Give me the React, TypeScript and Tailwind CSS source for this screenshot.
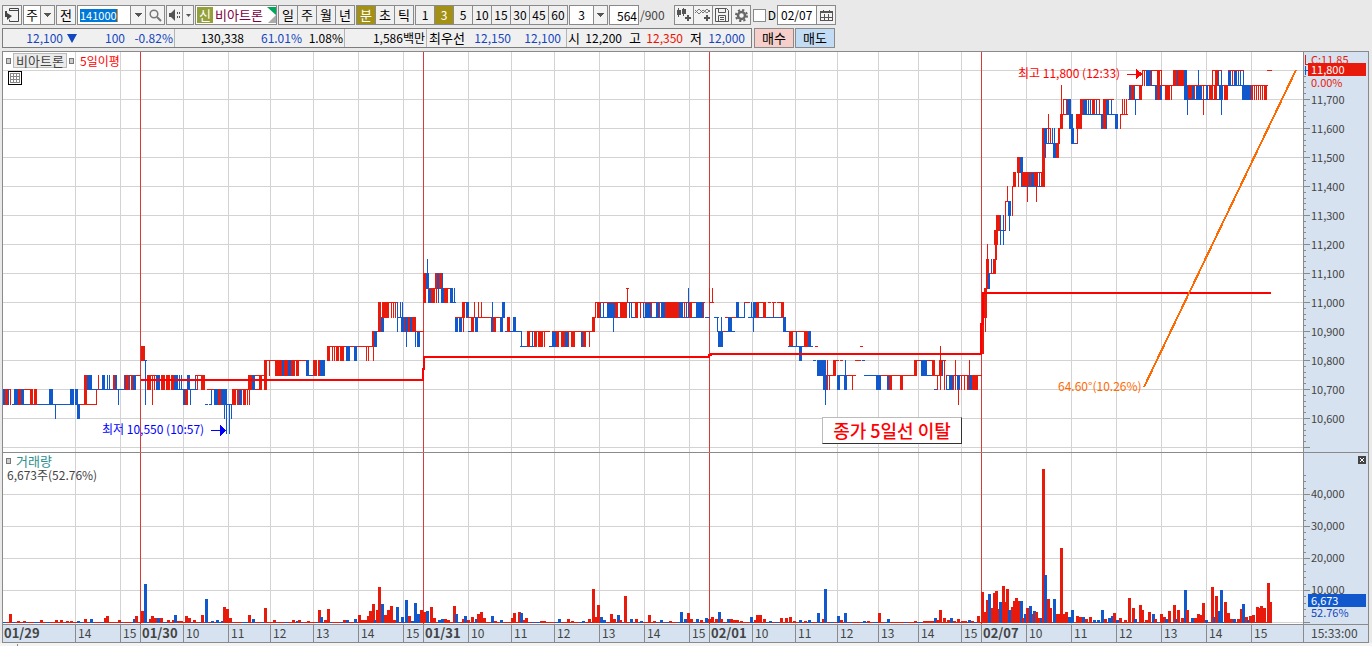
import type { ReactNode } from "react";
import clsx from "clsx";

const RED = "#e81a0c";
const BLUE = "#1058cc";

const PLOT_X = 3;
const PLOT_W = 1300;

const pct = (x: number) => `${((x - PLOT_X) / PLOT_W) * 100}%`;

// one level is 50 won, level 0 is 11,800
const levelY = (level: number) => Math.round(70 + 14.5 * level);

// color x width topLevel bottomLevel
const CANDLES = `
r 3 7 22 22;b 3 2 22 23;r 5 3 22 23;b 8 1 22 23;r 10 1 22 23;b 12 5 23 23;b 14 3 22 23;b 17 1 22 23;r 18 3 22 23;b 21 3 22 23;r 24 6 22 22;b 24 13 23 23;
r 30 3 22 23;r 34 3 22 23;b 37 12 23 23;b 49 4 22 23;b 53 17 23 23;b 55 1 23 24;b 70 4 22 23;b 75 3 22 23;b 77 3 23 24;r 80 4 23 23;
r 84 3 21 23;b 87 5 21 22;r 87 10 23 23;r 96 1 22 23;b 92 8 22 22;r 98 1 21 22;b 100 25 22 22;b 102 3 21 22;b 107 1 21 22;b 109 1 21 22;r 113 2 21 22;b 115 2 21 22;b 118 1 22 23;
r 124 17 21 21;r 124 1 21 22;b 125 1 21 22;r 126 3 21 22;b 129 1 21 22;r 131 2 21 22;b 133 3 21 22;
r 141 4 19 20;b 144 3 20 20;b 145 1 20 23;r 147 9 21 21;r 147 4 21 22;r 152 1 21 23;r 154 1 21 22;b 156 4 21 22;r 161 4 21 22;r 166 4 21 22;r 171 3 21 22;b 174 4 21 22;b 179 1 21 22;b 181 1 21 22;b 178 9 22 22;
b 183 2 22 23;r 185 3 22 23;b 187 3 21 22;b 190 1 22 23;b 188 10 22 22;b 195 1 21 22;r 195 10 21 21;r 197 1 21 22;r 201 4 21 22;r 207 4 22 22;
b 205 3 23 23;b 209 3 23 23;b 211 1 22 23;r 210 5 22 22;b 214 4 22 23;r 218 3 22 23;b 221 6 22 23;b 224 1 23 24;b 226 1 23 25;b 229 1 23 25;b 231 1 23 24;b 227 5 23 23;
r 232 4 22 23;r 237 2 22 23;b 239 3 22 23;r 243 3 22 23;r 247 1 22 23;r 249 1 22 23;r 232 18 22 22;
r 248 4 21 22;b 252 3 21 22;r 255 4 22 22;r 255 10 21 21;r 259 3 21 22;r 264 3 20 22;r 269 1 20 21;r 266 40 20 20;
r 275 7 20 21;b 282 2 20 21;r 284 4 20 21;b 288 3 20 21;r 291 4 20 21;r 296 3 20 21;b 306 3 20 21;b 309 5 21 21;r 313 4 20 21;r 318 2 20 21;b 320 5 20 21;
r 327 47 19 19;r 327 3 19 20;r 332 1 19 20;r 334 1 19 20;r 336 3 19 20;r 340 4 19 20;b 346 4 19 20;b 354 3 19 20;r 366 1 19 20;r 368 1 19 20;r 373 1 18 20;
r 372 2 18 19;b 374 3 18 19;r 377 3 18 18;r 378 3 16 18;b 381 3 17 18;r 382 7 16 17;r 382 16 16 16;r 391 1 16 17;r 393 1 16 17;r 395 1 16 17;b 397 1 16 18;b 400 1 16 17;b 402 1 16 17;b 397 5 17 17;
b 401 3 17 18;r 404 1 17 18;b 405 3 17 18;r 408 2 17 18;b 410 2 17 18;r 412 4 17 18;b 406 1 18 19;b 415 1 18 19;b 417 3 18 19;r 416 8 18 18;
r 423 3 14 16;b 426 3 14 15;b 427 1 13 14;b 428 3 15 16;r 428 24 15 15;r 431 4 15 16;r 436 1 15 16;b 438 1 15 16;r 435 2 14 15;b 437 2 14 15;r 439 3 14 15;b 442 1 14 15;b 441 3 15 16;r 444 4 15 16;b 450 3 15 16;b 454 1 15 16;b 453 3 16 16;
b 455 3 17 18;b 459 3 17 18;r 463 1 17 18;r 455 8 17 17;r 462 3 16 17;r 464 3 16 16;b 466 3 16 17;r 467 35 17 17;b 468 4 18 18;r 471 3 17 18;b 475 3 17 18;r 474 1 16 17;r 478 1 16 17;r 481 1 16 17;
b 492 1 16 17;b 491 2 17 18;r 493 3 17 18;b 500 3 17 18;b 502 3 16 17;b 505 3 18 18;r 507 3 17 18;b 513 3 17 18;b 510 11 18 18;b 521 1 18 19;b 520 7 19 19;
r 527 3 18 19;r 527 23 18 18;b 532 1 18 19;b 530 5 19 19;r 534 3 18 19;r 538 5 18 19;r 544 1 18 19;b 549 4 19 19;b 552 4 18 19;r 556 3 18 19;r 561 4 18 19;b 565 3 18 19;r 568 1 18 19;r 571 4 18 19;b 581 2 18 19;r 583 3 18 19;r 589 1 18 19;r 552 43 18 18;
r 592 3 17 18;r 595 1 16 17;r 597 3 16 17;b 600 1 16 17;b 603 1 16 17;b 600 24 17 17;b 607 8 16 17;r 595 48 16 16;r 615 3 16 17;r 620 7 16 17;b 613 1 17 18;r 627 1 15 16;r 626 3 15 15;b 629 1 16 17;b 631 1 16 17;b 631 5 17 17;
r 635 3 16 17;r 640 1 16 17;b 643 1 16 17;b 645 6 16 17;r 651 1 16 17;b 643 60 17 17;r 643 62 16 16;b 656 3 16 17;r 659 1 16 17;b 661 4 16 17;r 665 14 16 17;b 679 4 16 17;r 684 1 16 17;b 686 1 16 17;b 688 1 15 17;r 689 3 16 17;b 696 8 16 17;r 703 1 16 17;b 705 5 17 17;
r 709 1 15 16;r 712 1 15 16;r 709 5 16 16;b 714 5 17 17;b 717 1 17 18;b 721 1 17 18;b 718 5 18 19;r 723 3 18 18;b 726 9 18 18;b 728 4 17 18;r 725 3 17 17;r 731 5 17 17;
b 736 3 16 17;b 744 1 16 17;b 739 6 17 17;r 744 6 16 16;b 748 5 17 17;b 751 1 16 17;b 753 3 16 17;b 753 1 16 18;r 756 3 16 17;r 756 9 16 16;b 759 5 17 17;r 763 3 16 17;r 768 3 16 16;r 773 1 16 17;r 772 4 16 16;r 777 7 16 16;b 766 17 17 17;r 781 3 16 17;
b 783 3 17 18;b 785 4 18 18;r 789 4 18 19;r 789 15 18 18;b 796 1 18 19;b 788 25 19 19;r 804 4 18 19;b 808 3 18 19;r 815 3 19 19;r 860 3 19 19;b 799 3 19 20;
b 813 3 20 20;b 817 9 20 21;b 823 4 21 22;b 825 1 22 23;r 827 1 20 22;r 829 1 21 22;r 828 7 21 21;r 833 3 20 21;r 836 3 20 20;r 840 3 20 20;b 837 3 21 22;b 845 1 20 21;b 844 3 21 22;b 840 4 21 21;r 847 9 21 21;r 852 1 21 22;r 855 6 20 20;b 862 3 20 20;
b 864 13 21 21;b 876 5 21 22;b 887 2 21 22;r 889 3 21 22;r 900 3 21 22;r 881 34 21 21;r 914 3 20 21;r 917 4 20 20;b 921 6 20 21;b 927 5 21 21;r 927 8 20 20;r 932 3 20 21;r 935 5 21 21;
b 934 4 22 22;r 937 1 21 22;r 939 3 20 21;r 940 1 19 22;b 942 1 20 21;r 944 1 20 22;r 941 5 20 20;b 946 1 21 22;r 946 36 21 21;b 947 2 22 22;b 949 4 21 22;r 953 1 21 22;r 955 1 20 22;b 957 3 21 22;r 958 1 22 23;r 961 1 21 22;r 964 1 21 22;r 967 2 21 22;r 969 1 20 21;b 969 3 21 22;r 972 6 21 22;
r 980 4 17.5 19.5;r 984 3 15 17;r 985 1 17 18;r 986 3 13 15;r 987 1 12 13;b 988 2 14 15;b 991 1 13 14;r 993 3 13 14;r 990 6 14 14;r 994 4 11 12;r 995 1 12 13;r 996 1 12 13;r 996 4 10 11;b 1000 1 10 12;b 1003 1 10 12;b 1000 5 11 11;
r 1005 1 9 11;r 1005 3 9 9;r 1007 1 8 9;b 1008 3 9 10;b 1009 1 10 11;r 1012 1 8 10;r 1013 3 7 8;r 1018 1 7 8;r 1017 3 6 7;b 1020 3 6 7;b 1021 1 7 8;r 1022 7 7 8;b 1029 1 7 8;r 1030 1 7 8;b 1031 3 7 8;r 1034 4 7 8;b 1039 1 7 8;r 1022 20 7 7;b 1022 20 8 8;r 1027 1 8 9;r 1036 1 8 9;
r 1041 4 7 8;r 1042 3 4 8;b 1044 3 4 5;b 1045 1 5 6;r 1048 1 3 5;r 1050 1 4 5;b 1052 1 4 5;b 1054 1 4 5;r 1047 4 4 4;b 1047 9 5 5;b 1053 3 5 6;r 1056 3 5 6;r 1058 2 4 5;r 1060 3 3 4;r 1061 1 1 3;r 1063 1 2 3;r 1066 1 2 3;r 1063 5 2 2;r 1062 7 3 3;
b 1067 4 2 3;b 1069 4 3 4;b 1071 3 4 5;b 1074 4 5 5;r 1077 1 4 5;r 1076 6 3 4;r 1080 3 2 3;b 1083 4 2 3;b 1088 1 2 3;b 1090 1 2 3;r 1092 3 2 3;b 1096 1 2 3;r 1099 1 2 3;r 1080 20 2 2;b 1083 34 3 3;b 1101 3 3 4;r 1103 3 2 4;b 1106 1 3 4;
b 1106 3 2 3;b 1111 1 2 3;r 1103 11 2 2;b 1115 3 3 4;r 1120 1 3 4;r 1120 8 3 3;r 1122 1 2 3;r 1124 1 2 3;r 1126 1 2 3;r 1128 2 2 2;
b 1129 2 1 2;r 1131 3 1 2;b 1134 1 1 2;b 1135 1 2 3;r 1129 13 1 1;b 1134 5 2 2;r 1139 3 1 2;r 1142 1 0 1;r 1144 1 0 1;r 1142 20 0 0;b 1146 4 0 1;r 1150 1 0 1;b 1151 1 0 1;b 1152 6 1 1;
b 1155 3 1 2;r 1157 3 0 2;b 1160 2 1 2;r 1161 1 0 1;r 1165 5 1 2;r 1171 1 1 2;r 1162 12 1 1;r 1173 4 0 1;b 1177 1 0 1;r 1178 6 0 1;b 1184 3 0 1;b 1184 4 1 2;b 1187 1 2 3;r 1188 4 1 2;b 1192 3 1 2;r 1194 1 1 2;b 1196 6 1 2;b 1198 1 0 1;r 1187 40 1 1;b 1187 33 2 2;
r 1203 1 1 3;b 1206 2 1 2;r 1209 4 1 2;r 1212 1 0 1;r 1215 3 0 1;b 1218 1 0 1;b 1221 1 0 1;r 1212 10 0 0;r 1214 3 1 2;b 1219 4 1 2;b 1221 1 2 3;r 1224 4 1 2;
b 1228 3 0 1;r 1232 1 0 1;b 1234 3 0 1;b 1238 1 0 1;b 1240 1 0 1;b 1243 1 0 1;r 1228 16 0 0;b 1228 15 1 1;b 1242 9 1 2;r 1251 2 1 2;r 1254 1 1 2;r 1256 1 1 2;r 1258 1 1 2;r 1260 1 1 2;r 1262 1 1 2;r 1264 3 1 2;r 1251 17 1 1;r 1267 5 0 0
`;

// color x height
const VOLUMES = `
r 9 9;r 17 2;b 12 1;r 23 2;r 40 3;r 55 3;r 60 3;r 66 2;r 70 2;b 77 2;r 84 4;b 90 4;r 104 5;r 106 7;r 118 3;b 133 4;r 135 7;r 141 12;b 144 39;r 149 4;r 151 7;r 154 5;b 157 5;r 160 5;r 167 3;r 172 3;b 174 8;r 177 2;r 180 2;
r 185 7;r 188 5;r 193 3;r 201 8;b 205 24;b 211 2;b 216 3;b 221 2;r 223 16;r 226 14;r 229 5;r 248 8;b 252 4;r 264 15;r 273 3;r 292 3;b 296 2;r 298 3;r 307 2;r 318 13;b 320 6;r 324 3;r 327 14;r 343 3;b 346 3;b 354 4;r 358 8;
r 361 3;r 364 3;r 367 7;r 369 12;r 372 19;b 374 3;r 376 13;r 378 36;b 381 19;r 384 8;r 387 13;r 390 17;b 396 16;r 393 3;b 401 6;b 405 23;r 408 7;b 411 2;b 414 20;b 417 9;r 420 13;r 423 11;b 426 12;r 430 16;r 433 5;b 438 3;b 441 4;r 444 4;r 447 3;
r 453 17;b 455 9;r 462 4;b 464 7;r 467 3;r 471 6;b 475 4;r 477 9;r 480 11;r 483 5;b 491 7;r 494 2;b 500 3;r 511 5;r 513 10;r 518 11;b 520 10;r 523 3;r 525 5;b 532 1;r 540 2;r 543 2;b 558 4;r 567 4;r 571 2;b 582 2;r 588 4;r 592 34;r 594 6;r 597 18;b 600 6;b 603 3;
r 610 9;r 613 4;b 617 8;r 619 3;r 624 27;b 630 4;r 635 4;b 640 2;r 648 8;r 653 2;b 660 3;r 669 2;b 680 11;b 684 4;r 687 10;r 690 4;b 696 4;r 700 3;b 705 5;r 708 4;r 711 6;r 715 4;b 718 11;r 720 4;b 727 4;r 730 4;r 733 3;r 736 3;r 740 2;
b 750 6;r 754 3;r 756 8;r 759 8;r 763 4;b 769 2;r 780 5;r 785 5;r 789 6;r 793 2;b 799 3;r 804 2;b 808 3;b 817 10;r 822 4;b 824 34;b 837 7;r 840 3;b 844 10;b 863 2;r 867 2;r 878 10;b 887 4;r 914 2;
r 923 2;r 926 2;r 929 2;r 932 2;b 934 5;r 936 3;r 939 13;r 943 5;r 947 3;b 950 5;r 953 2;r 957 4;r 961 2;r 964 2;b 968 3;r 971 2;r 977 7;r 981 31;r 984 11;r 986 23;b 988 29;r 991 15;r 993 30;r 995 32;r 998 14;b 999 21;
r 1002 37;r 1005 21;r 1006 34;b 1008 13;r 1011 16;r 1013 22;r 1015 25;r 1018 22;b 1020 22;r 1022 5;b 1024 9;r 1026 15;b 1029 17;r 1032 9;b 1033 12;r 1035 11;r 1038 5;b 1040 5;r 1042 154;b 1044 48;r 1047 24;r 1049 15;b 1053 24;r 1056 9;r 1058 9;
r 1060 75;r 1063 9;r 1065 11;b 1068 6;b 1071 13;r 1076 7;r 1079 6;b 1082 6;r 1085 4;r 1089 6;b 1093 3;b 1097 3;b 1101 13;r 1104 4;b 1108 5;b 1111 7;r 1113 10;b 1116 3;r 1119 5;r 1124 3;r 1128 25;r 1132 15;b 1134 4;r 1139 18;r 1141 13;r 1145 3;r 1148 11;b 1152 9;r 1154 4;
r 1160 9;r 1163 6;b 1165 4;r 1168 12;r 1173 18;b 1175 4;r 1177 13;r 1181 5;b 1184 33;r 1186 13;b 1191 5;r 1194 5;r 1197 9;r 1200 8;r 1202 20;b 1205 3;r 1211 36;b 1213 6;r 1215 27;b 1218 12;b 1220 33;r 1224 21;r 1227 10;r 1230 4;b 1233 4;r 1237 4;r 1240 14;
b 1242 19;r 1245 6;b 1247 3;r 1249 7;r 1252 8;r 1256 16;r 1258 15;r 1260 17;r 1263 15;r 1267 40;r 1269 21
`;

const parse = (source: string) =>
  source
    .split(";")
    .map((entry) => entry.trim().split(" "))
    .map(([color, ...rest]) => ({ color: color === "r" ? RED : BLUE, n: rest.map(Number) }));

const candles = parse(CANDLES);
const volumes = parse(VOLUMES);

const TIMES = [
  { x: 3, label: "01/29", day: true },
  { x: 75, label: "14" },
  { x: 120, label: "15" },
  { x: 140, label: "01/30", day: true },
  { x: 183, label: "10" },
  { x: 228, label: "11" },
  { x: 270, label: "12" },
  { x: 313, label: "13" },
  { x: 358, label: "14" },
  { x: 403, label: "15" },
  { x: 423, label: "01/31", day: true },
  { x: 468, label: "10" },
  { x: 511, label: "11" },
  { x: 554, label: "12" },
  { x: 599, label: "13" },
  { x: 644, label: "14" },
  { x: 689, label: "15" },
  { x: 709, label: "02/01", day: true },
  { x: 752, label: "10" },
  { x: 795, label: "11" },
  { x: 837, label: "12" },
  { x: 878, label: "13" },
  { x: 918, label: "14" },
  { x: 961, label: "15" },
  { x: 981, label: "02/07", day: true },
  { x: 1026, label: "10" },
  { x: 1071, label: "11" },
  { x: 1116, label: "12" },
  { x: 1161, label: "13" },
  { x: 1206, label: "14" },
  { x: 1251, label: "15" },
];

const PRICES = ["11,700", "11,600", "11,500", "11,400", "11,300", "11,200", "11,100", "11,000", "10,900", "10,800", "10,700", "10,600"];
const VOLUME_MARKS = ["40,000", "30,000", "20,000", "10,000"];

function TimeLines({ top, height }: { top: number; height: number }) {
  return (
    <>
      {TIMES.slice(1).map((t) => (
        <rect key={t.x} x={t.x} y={top} width={1} height={height} fill={t.day ? "#d83a3a" : "#d3d3d3"} />
      ))}
    </>
  );
}

function PricePlot() {
  return (
    <svg viewBox="3 52 1300 400" preserveAspectRatio="none" shapeRendering="crispEdges" className="block h-[400px] w-full">
      {Array.from({ length: 14 }, (_, i) => (
        <rect key={i} x={3} y={70 + i * 29} width={1300} height={1} fill="#d3d3d3" />
      ))}
      <TimeLines top={52} height={400} />
      {candles.map(({ color, n: [x, w, a, b] }, i) => (
        <rect key={i} x={x} y={levelY(a)} width={w} height={levelY(b) - levelY(a) + 1} fill={color} />
      ))}
      <path
        d="M141 380H423V369H424V357H709V355H711V354H981V324H983V293H1271"
        fill="none"
        stroke="#ff0000"
        strokeWidth={2}
      />
      <path d="M1144 387L1296 70" stroke="#ff6a00" strokeWidth={2} />
      <path d="M1127 74h9v-5l7 5l-7 5v-4h-9z" fill="#ff0000" />
      <path d="M211 430h9v-5l6 5l-6 6v-5h-9z" fill="#0000ff" />
    </svg>
  );
}

function VolumePlot() {
  return (
    <svg viewBox="3 453 1300 171" preserveAspectRatio="none" shapeRendering="crispEdges" className="block h-[171px] w-full">
      {[494, 526, 558, 590, 622].map((y) => (
        <rect key={y} x={3} y={y} width={1300} height={1} fill="#d3d3d3" />
      ))}
      <TimeLines top={453} height={171} />
      <rect x={3} y={622} width={1269} height={1} fill={RED} />
      {Array.from({ length: 90 }, (_, i) => (
        <rect key={i} x={3 + i * 14 + ((i * 5) % 7)} y={622} width={3 + ((i * 3) % 4)} height={1} fill={BLUE} />
      ))}
      {volumes.map(({ color, n: [x, h] }, i) => (
        <rect key={i} x={x} y={623 - h} width={3} height={h} fill={color} />
      ))}
    </svg>
  );
}

function Arrow() {
  return (
    <svg viewBox="0 0 7 4" className="pointer-events-none h-1 w-[7px]" shapeRendering="crispEdges">
      <path d="M0 0h7L3.500 4z" fill="#555" />
    </svg>
  );
}

function DropDown({ label, value, className }: { label: string; value: string; className: string }) {
  return (
    <div className={clsx("flex h-5 border border-[#8a8a8a] bg-white", className)}>
      <select aria-label={label} defaultValue={value} className="min-w-0 flex-1 appearance-none text-center outline-none">
        <option>{value}</option>
      </select>
      <span className="flex w-[14px] items-center justify-center border-l border-[#8a8a8a] bg-[#f3f3f3]">
        <Arrow />
      </span>
    </div>
  );
}

function ButtonGroup({ items, active, className }: { items: string[]; active?: string; className: string }) {
  return (
    <div className={clsx("flex h-5 divide-x divide-[#8a8a8a] border border-[#8a8a8a] bg-[#f0f0f0]", className)}>
      {items.map((item) => (
        <button key={item} className={clsx("min-w-0 flex-1 leading-[18px]", item === active && "bg-[#a39116] text-white")}>
          {item}
        </button>
      ))}
    </div>
  );
}

function IconButton({ label, children, className }: { label: string; children: ReactNode; className?: string }) {
  return (
    <button aria-label={label} className={clsx("flex items-center justify-center bg-[#f3f3f3]", className ?? "flex-1")}>
      {children}
    </button>
  );
}

const box = "flex h-5 divide-x divide-[#8a8a8a] border border-[#8a8a8a]";

function Toolbar() {
  return (
    <div className="flex h-5 items-center gap-px pl-[2px] text-[13px] leading-[18px]">
      <div className={clsx(box, "w-5")}>
        <IconButton label="창 이동">
          <svg width="14" height="14" viewBox="0 0 14 14" fill="none" stroke="#444">
            <path d="M4.500 3V.5h9v13h-9v-2M4 2.500h9" />
            <path d="M0 3h2v2l5 3-5 4V9H0z" fill="#444" stroke="none" />
          </svg>
        </IconButton>
      </div>
      <DropDown label="종목 구분" value="주" className="w-8" />
      <div className="flex h-5 w-5 border border-[#8a8a8a] bg-[#f3f3f3]">
        <button className="flex-1">전</button>
      </div>
      <div className={clsx(box, "w-[88px]")}>
        <div className="flex w-[53px] items-center bg-white pl-[2px]">
          <input
            aria-label="종목 코드"
            defaultValue="141000"
            className="h-[13px] w-[38px] border-r border-[#ff8a00] bg-[#0078d7] text-[11px] text-white outline-none"
          />
        </div>
        <IconButton label="종목 목록" className="w-[15px]">
          <Arrow />
        </IconButton>
        <IconButton label="검색">
          <svg width="13" height="13" viewBox="0 0 13 13" fill="none" stroke="#777" strokeWidth="1.5">
            <circle cx="5" cy="5" r="3.800" />
            <path d="M8 8l4 4" strokeWidth="2" />
          </svg>
        </IconButton>
      </div>
      <div className={clsx(box, "w-7")}>
        <IconButton label="소리">
          <svg width="13" height="12" viewBox="0 0 13 12" fill="#555">
            <path d="M1 4h2l4-4v12L3 8H1zM9 3h1v2H9zM11 3h1v2h-1zM9 7h1v2H9zM11 7h1v2h-1z" />
          </svg>
        </IconButton>
        <IconButton label="소리 목록" className="w-[10px]">
          <svg width="5" height="3" viewBox="0 0 5 3">
            <path d="M0 0h5L2.500 3z" fill="#555" />
          </svg>
        </IconButton>
      </div>
      <div className="flex h-5 w-[82px] border border-[#8a8a8a] bg-white">
        <span className="my-px ml-px w-4 bg-[#94a03a] text-center leading-4 text-white">신</span>
        <span className="flex-1 whitespace-nowrap pl-[2px] leading-[17px] text-[#7b0046]">비아트론</span>
        <svg width="9" height="18" viewBox="0 0 9 18">
          <path d="M0 1h9v8z" fill="#00a65a" />
          <path d="M9 9v8H1z" fill="#aaa" />
        </svg>
      </div>
      <ButtonGroup items={["일", "주", "월", "년"]} className="w-[77px]" />
      <ButtonGroup items={["분", "초", "틱"]} active="분" className="w-[58px]" />
      <ButtonGroup items={["1", "3", "5", "10", "15", "30", "45", "60"]} active="3" className="w-[153px] text-[12px]" />
      <DropDown label="분 간격" value="3" className="w-[39px] text-[12px]" />
      <label className="flex w-[64px] items-center gap-px text-[12px] text-[#444]">
        <input
          defaultValue="564"
          className="h-5 w-[30px] border border-[#8a8a8a] bg-white pr-px text-right text-black outline-none"
        />
        /900
      </label>
      <div className={clsx(box, "w-[77px]")}>
        <IconButton label="차트 추가">
          <svg width="16" height="14" viewBox="0 0 16 14" fill="#555">
            <path d="M2 0h1v9H2zM1 2h4v5H1zM7 0h1v8H7zM6 1h4v5H6zM11 7h2v2h2v2h-2v2h-2v-2H9V9h2z" />
          </svg>
        </IconButton>
        <IconButton label="지표 추가">
          <svg width="16" height="14" viewBox="0 0 16 14" fill="none" stroke="#777">
            <path d="M0 5l4-4 4 4 4-4 3 3M0 2l4 4 4-4 4 3 3-3" />
            <path d="M12 7v6M9 10h6" stroke="#555" strokeWidth="2" />
          </svg>
        </IconButton>
        <IconButton label="저장">
          <svg width="14" height="14" viewBox="0 0 14 14" fill="none" stroke="#555">
            <path d="M.5.5h11l2 2v11H.5zM3.500.5v4h7v-4M3.500 13.500v-6h7v6M5 9.500h4M5 11.500h4" />
          </svg>
        </IconButton>
        <IconButton label="설정">
          <svg width="13" height="13" viewBox="0 0 13 13" fill="none" stroke="#666">
            <circle cx="6.500" cy="6.500" r="3.500" strokeWidth="2.500" />
            <circle cx="6.500" cy="6.500" r="5.500" strokeWidth="2" strokeDasharray="2.200 2.120" />
          </svg>
        </IconButton>
      </div>
      <label className="ml-px flex w-[23px] items-center gap-[2px] text-[12px]">
        <input type="checkbox" className="size-[13px] appearance-none border border-[#8a8a8a] bg-white" />D
      </label>
      <div className={clsx(box, "w-[59px]")}>
        <input
          aria-label="날짜"
          defaultValue="02/07"
          className="w-[39px] bg-white pl-[3px] text-[12px] outline-none"
        />
        <IconButton label="달력">
          <svg width="13" height="11" viewBox="0 0 13 11" fill="none" stroke="#555" shapeRendering="crispEdges">
            <path d="M.5 1.500h12v9H.5zM0 2.500h13M3.500 0v3M9.500 0v3M4.500 4v6M8.500 4v6M1 7.500h12" />
          </svg>
        </IconButton>
      </div>
    </div>
  );
}

function QuoteBar() {
  return (
    <div className="mt-[3px] flex h-5 pl-[2px] text-[12px] leading-[18px]">
      <div className="flex w-[750px] whitespace-nowrap border border-[#7d7d7d] bg-[#f0f0f0] text-right">
        <span className="w-[60px] text-[#1446be]">12,100</span>
        <span className="flex w-[14px] items-center justify-end">
          <svg width="10" height="9" viewBox="0 0 10 9">
            <path d="M0 0h10L5 9z" fill="#1446be" />
          </svg>
        </span>
        <span className="w-12 text-[#1446be]">100</span>
        <span className="w-[50px] border-r border-[#b5b5b5] pr-px text-[#1446be]">-0.82%</span>
        <span className="w-[69px]">130,338</span>
        <span className="w-[58px] text-[#1446be]">61.01%</span>
        <span className="w-[43px] border-r border-[#b5b5b5] pr-px">1.08%</span>
        <span className="w-[82px] border-r border-[#b5b5b5] pr-px">1,586백만</span>
        <span className="w-[38px] text-[13px]">최우선</span>
        <span className="w-[46px] text-[#1446be]">12,150</span>
        <span className="w-[56px] border-r border-[#b5b5b5] pr-[5px] text-[#1446be]">12,100</span>
        <span className="w-[13px] text-[13px]">시</span>
        <span className="w-[42px]">12,200</span>
        <span className="w-[19px] text-[13px]">고</span>
        <span className="w-[42px] text-[#f01000]">12,350</span>
        <span className="w-[19px] text-[13px]">저</span>
        <span className="w-[43px] text-[#1446be]">12,000</span>
      </div>
      <button className="ml-[2px] w-10 border border-[#8a8a8a] bg-[#f6cfca] text-[13px]">매수</button>
      <button className="ml-px w-10 border border-[#8a8a8a] bg-[#c3dcf5] text-[13px]">매도</button>
    </div>
  );
}

function Marker() {
  return <span className="h-[6px] w-[5px] border border-[#777] bg-[#ccc]" />;
}

function PriceAxis() {
  return (
    <div className="relative border-l border-[#8a8a8a] bg-[#d6e2ef] pt-[33px]">
      <svg viewBox="0 0 6 400" shapeRendering="crispEdges" className="absolute left-0 top-0 h-[400px] w-[6px]">
        {Array.from({ length: 66 }, (_, i) => (
          <rect key={i} x={0} y={Math.round(18 + i * 5.8)} width={i % 5 === 0 ? 6 : 2} height={1} fill="#8a8a8a" />
        ))}
      </svg>
      {PRICES.map((price) => (
        <p key={price} className="h-[29px] pl-[7px] leading-[29px]">
          {price}
        </p>
      ))}
      <span className="absolute left-[7px] top-px leading-3 text-[#e81a0c]">C:11.85</span>
      <svg width="8" height="24" viewBox="0 0 8 24" fill="none" shapeRendering="crispEdges" className="absolute left-0 top-0">
        <path d="M1.500 3v9h3" stroke="#e81a0c" />
        <path d="M1.500 14v9M1.500 18.500h4" stroke={BLUE} />
      </svg>
      <span className="absolute left-1 right-[2px] top-[11px] h-[13px] bg-[#e81a0c] pl-[3px] leading-3 text-white">11,800</span>
      <span className="absolute left-[7px] top-6 leading-3 text-[#e81a0c]">0.00%</span>
    </div>
  );
}

function VolumeAxis() {
  return (
    <div className="relative border-l border-[#8a8a8a] bg-[#d6e2ef] pt-[25px]">
      <svg viewBox="0 0 6 171" shapeRendering="crispEdges" className="absolute left-0 top-0 h-[171px] w-[6px]">
        {Array.from({ length: 24 }, (_, i) => (
          <rect key={i} x={0} y={Math.round(169 - i * 6.4)} width={i % 5 === 0 ? 6 : 2} height={1} fill="#8a8a8a" />
        ))}
      </svg>
      {VOLUME_MARKS.map((mark) => (
        <p key={mark} className="h-8 pl-[7px] leading-[31px]">
          {mark}
        </p>
      ))}
      <button aria-label="닫기" className="absolute right-[2px] top-[3px] size-2 bg-[#444]">
        <svg viewBox="0 0 8 8" stroke="#fff" className="size-2">
          <path d="M2 2l4 4M6 2l-4 4" />
        </svg>
      </button>
      <span className="absolute left-1 right-[2px] top-[141px] h-[13px] bg-[#1058cc] pl-[3px] leading-3 text-white">6,673</span>
      <span className="absolute left-[7px] top-[153px] leading-3 text-[#1446be]">52.76%</span>
    </div>
  );
}

function TimeAxis() {
  return (
    <div className="flex min-w-0">
      {TIMES.map((t, i) => (
        <div key={t.x} className="min-w-0 basis-0" style={{ flexGrow: (TIMES[i + 1]?.x ?? 1303) - t.x }}>
          <span
            className={clsx(
              "block h-full whitespace-nowrap leading-[15px]",
              i > 0 && "border-l border-[#8a8a8a]",
              t.day ? "pl-px text-[13px] font-bold" : "pl-[2px]",
            )}
          >
            {t.label}
          </span>
        </div>
      ))}
    </div>
  );
}

export default function App() {
  return (
    <div className="min-h-screen overflow-hidden bg-[#e9e9e9] pt-[5px] font-['Noto_Sans_CJK_KR','Liberation_Sans',sans-serif] text-black">
      <Toolbar />
      <QuoteBar />
      <main className="ml-[2px] mr-[3px] mt-[3px] border border-[#8a8a8a] bg-[#d6e2ef] text-[11px] text-[#444]">
        <section className="grid grid-cols-[minmax(0,1fr)_65px] border-b border-[#8a8a8a]">
          <div className="relative bg-white">
            <PricePlot />
            <div className="absolute left-[3px] top-px flex items-center gap-[2px]">
              <Marker />
              <button className="h-[15px] w-[54px] border border-[#bbb] bg-[#ebebeb] text-[13px] leading-[13px] text-[#444]">비아트론</button>
              <Marker />
              <span className="pl-1 text-[12px] leading-[14px] text-[#ff0000]">5일이평</span>
            </div>
            <button aria-label="데이터 표" className="absolute left-[5px] top-[19px] size-[14px] border border-black bg-white">
              <svg viewBox="0 0 12 12" fill="none" stroke="#888" shapeRendering="crispEdges" className="size-3">
                <path d="M1.500 1.500h9v9h-9zM4.500 1v10M7.500 1v10M1 4.500h10M1 7.500h10" />
              </svg>
            </button>
            <span
              className="absolute top-[14px] whitespace-nowrap text-[12px] leading-[14px] text-[#ff0000]"
              style={{ left: pct(1018) }}
            >
              최고 11,800 (12:33)
            </span>
            <span
              className="absolute top-[370px] whitespace-nowrap text-[12px] leading-[14px] text-[#0000ff]"
              style={{ left: pct(102) }}
            >
              최저 10,550 (10:57)
            </span>
            <span
              className="absolute top-[327px] whitespace-nowrap text-[12px] leading-[14px] text-[#ff6a00]"
              style={{ left: pct(1058) }}
            >
              64.60°(10.26%)
            </span>
            <span
              className="absolute top-[365px] h-[27px] w-[140px] whitespace-nowrap border border-b-[#333] border-l-[#bbb] border-r-[#333] border-t-[#bbb] bg-white text-center text-[18px] font-medium leading-[25px] text-[#ff0000]"
              style={{ left: pct(822) }}
            >
              종가 5일선 이탈
            </span>
          </div>
          <PriceAxis />
        </section>
        <section className="grid grid-cols-[minmax(0,1fr)_65px] border-b border-[#8a8a8a]">
          <div className="relative bg-white">
            <VolumePlot />
            <div className="absolute left-[3px] top-0">
              <p className="flex items-center gap-[5px] text-[13px] leading-[15px] text-[#2a9090]">
                <Marker />
                거래량
              </p>
              <p className="pl-px text-[12px] leading-[14px]">6,673주(52.76%)</p>
            </div>
          </div>
          <VolumeAxis />
        </section>
        <footer className="grid h-[17px] grid-cols-[minmax(0,1fr)_65px] text-[12px]">
          <TimeAxis />
          <span className="border-l border-[#8a8a8a] pl-[7px] leading-[15px]">15:33:00</span>
        </footer>
      </main>
      <div className="flex h-[3px] items-end bg-[#f4f4f4]">
        <span className="h-[2px] w-[18px] border-r border-[#888]" />
      </div>
    </div>
  );
}
